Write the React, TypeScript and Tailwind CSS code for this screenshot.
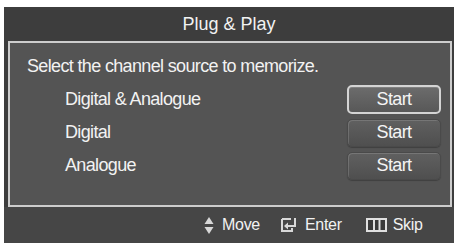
import React from "react";

function StartButton({ selected }: { selected?: boolean }) {
  return (
    <div
      className={
        selected
          ? "w-[94px] h-[29px] rounded-[5px] border-2 border-[#d4d4d4] bg-gradient-to-b from-[#6c6c6c] to-[#585858] flex items-center justify-center text-[18px] tracking-[-0.6px] text-[#f4f4f4] shadow-[inset_0_1px_0_rgba(255,255,255,0.15)]"
          : "w-[94px] h-[28px] rounded-[5px] border border-[#4a4a4a] bg-gradient-to-b from-[#606060] to-[#4f4f4f] flex items-center justify-center text-[18px] tracking-[-0.6px] text-[#f4f4f4] shadow-[inset_1px_1px_0_rgba(255,255,255,0.14),0_1px_1px_rgba(0,0,0,0.25)]"
      }
    >
      Start
    </div>
  );
}

function Row({ label, selected }: { label: string; selected?: boolean }) {
  return (
    <div className="h-[33px] flex items-center justify-between pl-[55px] pr-[9px]">
      <span className="text-[18px] tracking-[-0.65px]">{label}</span>
      <StartButton selected={selected} />
    </div>
  );
}

export default function App() {
  return (
    <div
      className="w-[454px] h-[243px] bg-white pl-[4px] pt-[7px]"
      style={{ fontFamily: '"Liberation Sans", Arial, sans-serif' }}
    >
      <div className="w-[450px] h-[236px] bg-[#3d3d3d] flex flex-col text-[#f2f2f2]">
        <div className="h-[34px] flex items-center justify-center text-[18px] tracking-[0px]">
          Plug &amp; Play
        </div>
        <div className="ml-[4px] mr-[2px] h-[166px] border-2 border-[#cdcdcd] bg-[#545454] pt-[7px]">
          <div className="h-[33px] flex items-center pl-[17px] text-[18px] tracking-[-0.65px]">
            Select the channel source to memorize.
          </div>
          <Row label="Digital & Analogue" selected />
          <Row label="Digital" />
          <Row label="Analogue" />
        </div>
        <div className="flex-1 bg-[#464646] flex items-center pl-[200px] text-[16px] tracking-[-0.3px]">
          <svg width="10" height="19" viewBox="0 0 10 19" className="mr-[8px]">
            <polygon points="5,1 9.5,8 0.5,8" fill="#d8d8d8" />
            <polygon points="0.5,11 9.5,11 5,18" fill="#d8d8d8" />
          </svg>
          <span>Move</span>
          <svg width="16" height="14" viewBox="0 0 16 14" className="ml-[21px] mr-[8px]">
            <path d="M1 1 H10 M1 1 V13 H11 V10" stroke="#d8d8d8" strokeWidth="2" fill="none" />
            <path d="M14 0 V8 H6" stroke="#d8d8d8" strokeWidth="2" fill="none" />
            <polygon points="3,8 7,4.5 7,11.5" fill="#d8d8d8" />
          </svg>
          <span>Enter</span>
          <svg width="21" height="14" viewBox="0 0 21 14" className="ml-[24px] mr-[6px]">
            <rect x="1" y="1" width="19" height="12" stroke="#e0e0e0" strokeWidth="2" fill="#3a3a3a" />
            <rect x="7" y="1" width="2" height="12" fill="#e0e0e0" />
            <rect x="12.5" y="1" width="2" height="12" fill="#e0e0e0" />
          </svg>
          <span>Skip</span>
        </div>
      </div>
    </div>
  );
}
